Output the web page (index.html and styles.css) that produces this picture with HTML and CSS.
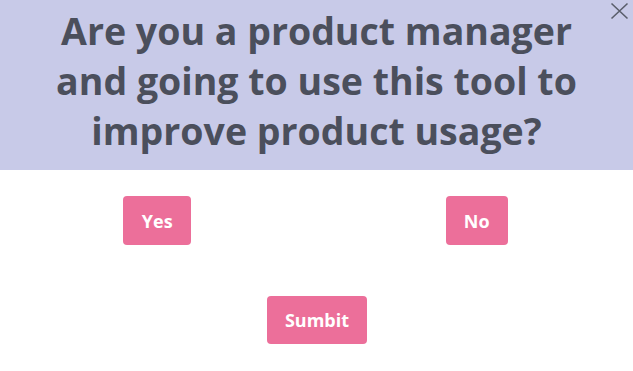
FILE: index.html
```html
<!DOCTYPE html>
<html>
<head>
<meta charset="utf-8">
<link rel="stylesheet" href="styles.css">
</head>
<body>
<div class="modal">
  <header class="head">
    <h1 class="title">Are you a product manager<br>and going to use this tool to<br>improve product usage?</h1>
    <button class="close" aria-label="Close">
      <svg width="19" height="18" viewBox="0 0 19 18"><path d="M1.5 1.5 L17.5 16.5 M17.5 1.5 L1.5 16.5" stroke="#5a5e6b" stroke-width="1.6" fill="none"/></svg>
    </button>
  </header>
  <div class="choices">
    <div class="col"><button class="btn btn-yes">Yes</button></div>
    <div class="col"><button class="btn btn-no">No</button></div>
  </div>
  <div class="submit-row"><button class="btn btn-submit">Sumbit</button></div>
</div>
</body>
</html>
```
FILE: styles.css
```css
html, body { margin: 0; padding: 0; background: #fff; }
body { font-family: "Open Sans", "Noto Sans", sans-serif; width: 633px; height: 371px; overflow: hidden; }
.modal { width: 633px; }
.head {
  position: relative;
  background: #c8cae8;
  height: 170px;
  box-sizing: border-box;
  padding: 6px 0 0;
}
.title {
  margin: 0;
  text-align: center;
  font-size: 37.5px;
  line-height: 50px;
  font-weight: 700;
  color: #4b4f5c;
  white-space: nowrap;
}
.close {
  position: absolute;
  top: 2px;
  right: 4px;
  border: 0;
  background: none;
  padding: 0;
  width: 19px;
  height: 18px;
  cursor: pointer;
}
.close svg { display: block; }
.choices {
  display: grid;
  grid-template-columns: 1fr 1fr;
  padding-top: 26px;
}
.col { display: flex; justify-content: center; }
.btn {
  border: 0;
  background: #ec6f9a;
  color: #fff;
  font-family: "Open Sans", "Noto Sans", sans-serif;
  font-weight: 700;
  font-size: 18px;
  border-radius: 4px;
  height: 49px;
  padding: 0;
}
.btn-yes { width: 68px; margin-left: -2px; }
.btn-no { width: 62px; margin-left: 4px; }
.submit-row { display: flex; justify-content: center; padding-top: 51px; }
.btn-submit { width: 100px; height: 48px; margin-left: 1px; }
```
